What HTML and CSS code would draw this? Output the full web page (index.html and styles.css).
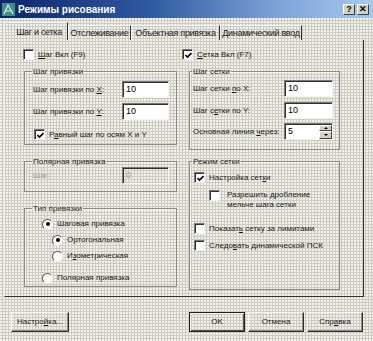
FILE: index.html
```html
<!DOCTYPE html>
<html>
<head>
    <title>Режимы рисования</title>
    <link rel="stylesheet" href="styles.css">
</head>
<body>
    <div class="dialog">
        <div class="titlebar">
            <span class="app-icon">
                <svg width="13" height="13" viewBox="0 0 13 13">
                    <rect x="0" y="0" width="13" height="13" fill="#3f8f86"/>
                    <path d="M2 11 L6 2 L11 11 M3.5 8 L9.5 8" stroke="#d8f0e8" stroke-width="1.2" fill="none"/>
                </svg>
            </span>
            <span class="title">Режимы рисования</span>
            <span class="tb-btns">
                <span class="tb-btn">?</span>
                <span class="tb-btn">✕</span>
            </span>
        </div>

        <div class="tabs">
            <span class="tab active">Шаг и сетка</span>
            <span class="tab t2">Отслеживание</span>
            <span class="tab t3">Объектная привязка</span>
            <span class="tab t4">Динамический ввод</span>
        </div>

        <div class="panel">
            <div class="col col-left">
                <div class="check top-check"><span class="box"></span><span><u>Ш</u>аг Вкл (F9)</span></div>

                <fieldset class="group g-snap">
                    <legend>Шаг привязки</legend>
                    <div class="field"><span>Шаг привязки по <u>X</u>:</span><span class="input">10</span></div>
                    <div class="field f2"><span>Шаг привязки по <u>Y</u>:</span><span class="input">10</span></div>
                    <div class="check equal"><span class="box on">
                        <svg width="7" height="7" viewBox="0 0 7 7"><path d="M0.5 3 L2.5 5 L6.5 1" stroke="#000" stroke-width="1.6" fill="none"/></svg>
                    </span><span>Р<u>а</u>вный шаг по осям X и Y</span></div>
                </fieldset>

                <fieldset class="group g-polar">
                    <legend>Полярная привязка</legend>
                    <div class="field disabled"><span>Шаг:</span><span class="input off">0</span></div>
                </fieldset>

                <fieldset class="group g-type">
                    <legend>Тип привязки</legend>
                    <div class="radio r1"><span class="dot on"></span><span>Шаговая привязка</span></div>
                    <div class="radio r2"><span class="dot on"></span><span>Ортогональная</span></div>
                    <div class="radio r2"><span class="dot"></span><span>И<u>з</u>ометрическая</span></div>
                    <div class="radio r1 r-last"><span class="dot"></span><span>Полярная привязка</span></div>
                </fieldset>
            </div>

            <div class="col col-right">
                <div class="check top-check right-check"><span class="box on">
                    <svg width="7" height="7" viewBox="0 0 7 7"><path d="M0.5 3 L2.5 5 L6.5 1" stroke="#000" stroke-width="1.6" fill="none"/></svg>
                </span><span><u>С</u>етка Вкл (F7)</span></div>

                <fieldset class="group g-grid">
                    <legend>Шаг сетки</legend>
                    <div class="field"><span>Шаг сетки <u>п</u>о X:</span><span class="input">10</span></div>
                    <div class="field f2"><span>Шаг с<u>е</u>тки по Y:</span><span class="input">10</span></div>
                    <div class="field f3"><span>Основная линия <u>ч</u>ерез:</span><span class="input spin">5<span class="spinner"><span class="up"></span><span class="down"></span></span></span></div>
                </fieldset>

                <fieldset class="group g-mode">
                    <legend>Режим сетки</legend>
                    <div class="check c1"><span class="box on">
                        <svg width="7" height="7" viewBox="0 0 7 7"><path d="M0.5 3 L2.5 5 L6.5 1" stroke="#000" stroke-width="1.6" fill="none"/></svg>
                    </span><span>Настройка сет<u>к</u>и</span></div>
                    <div class="check c2"><span class="box"></span><span>Разрешить дробление<br>мельче шага сетки</span></div>
                    <div class="check c3"><span class="box"></span><span>Показат<u>ь</u> сетку за лимитами</span></div>
                    <div class="check c4"><span class="box"></span><span>Следо<u>в</u>ать динамической ПСК</span></div>
                </fieldset>
            </div>
        </div>

        <div class="buttons">
            <span class="btn">Настро<u>й</u>ка...</span>
            <span class="spacer"></span>
            <span class="btn default">OK</span>
            <span class="btn">Отмена</span>
            <span class="btn">Спр<u>а</u>вка</span>
        </div>
    </div>
</body>
</html>
```

FILE: styles.css
```css
body {
    margin: 0;
    font-family: "Liberation Sans", Arial, sans-serif;
    font-size: 8px;
    color: #1a1a1a;
    white-space: nowrap;
}
u { text-decoration-thickness: 1px; text-underline-offset: 1px; }

.dialog {
    width: 373px;
    height: 341px;
    overflow: hidden;
    background-color: #cdcac2;
    background-image: radial-gradient(circle at 1px 1px, #f3f1eb 0.75px, transparent 1.1px);
    background-size: 3px 3px;
}

/* title bar */
.titlebar {
    height: 18px;
    display: flex;
    align-items: center;
    padding: 0 4px 0 2px;
    background: linear-gradient(to right, #0a246a, #2f5aa0 40%, #7ea4d8 75%, #a6caf0);
    color: #fff;
}
.app-icon { width: 13px; height: 13px; display: flex; margin-right: 3px; }
.title { font-weight: bold; font-size: 10px; flex: 1; }
.tb-btns { display: flex; gap: 2px; }
.tb-btn {
    width: 12px;
    height: 11px;
    box-sizing: border-box;
    background: #d4d0c8;
    border: 1px solid;
    border-color: #fff #404040 #404040 #fff;
    color: #000;
    font-size: 9px;
    font-weight: bold;
    line-height: 9px;
    text-align: center;
}

/* tabs */
.tabs {
    display: flex;
    align-items: flex-end;
    height: 18px;
    margin: 4px 0 0 4px;
    font-size: 9px;
    letter-spacing: -0.3px;
}
.tab {
    box-sizing: border-box;
    height: 15px;
    line-height: 14px;
    text-align: center;
    border-top: 1px solid #f4f4f4;
    border-left: 1px solid #f4f4f4;
    border-right: 1px solid #303030;
}
.tab.active { width: 64px; height: 18px; line-height: 18px; padding-left: 6px; }
.tab.t2 { width: 63px; }
.tab.t3 { width: 89px; }
.tab.t4 { width: 82px; }

/* page */
.panel {
    box-sizing: border-box;
    width: 360px;
    height: 257px;
    margin-left: 4px;
    border: 1px solid;
    border-color: #f4f4f4 #303030 #303030 #f4f4f4;
    border-top: none;
    display: flex;
    gap: 12px;
    padding: 9px 0 0 19px;
}
.col-left { width: 153px; }
.col-right { width: 151px; }

.group {
    margin: 0;
    min-width: 0;
    border: 1px solid #8d8a83;
    box-shadow: 1px 1px 0 #f4f2ee inset;
    padding: 0 7px 4px 8px;
}
.group legend { padding: 0 1px; line-height: 11px; margin-left: -1px; }

.g-snap { margin-top: 5px; }
.g-polar { margin-top: 11px; padding-bottom: 7px; }
.g-type { margin-top: 11px; padding-bottom: 2px; }
.g-grid { margin-top: 5px; padding: 0 6px 9px 3px; }
.g-mode { margin-top: 6px; padding: 0 6px 0 3px; height: 134px; box-sizing: border-box; }

/* fields */
.field {
    display: flex;
    align-items: center;
    justify-content: space-between;
    height: 17px;
    margin-top: 4px;
}
.field.f2 { margin-top: 5px; }
.g-grid .field { margin-top: 3px; }
.g-grid .field.f2 { margin-top: 5px; }
.g-grid .field.f3 { margin-top: 4px; }
.field.disabled { margin-top: 0; color: #a19e97; }

.input {
    position: relative;
    box-sizing: border-box;
    width: 47px;
    height: 17px;
    background: #fff;
    border: 1px solid;
    border-color: #7a7770 #f4f4f4 #f4f4f4 #7a7770;
    box-shadow: inset 1px 1px 0 #303030;
    padding-left: 3px;
    line-height: 15px;
    font-size: 9px;
    color: #000;
}
.g-grid .input { width: 49px; }
.input.off { background: transparent; color: #a19e97; }

.spinner {
    position: absolute;
    right: 0;
    top: 1px;
    width: 13px;
    height: 14px;
    display: flex;
    flex-direction: column;
}
.spinner span {
    flex: 1;
    background: #d4d0c8;
    border: 1px solid;
    border-color: #fff #404040 #404040 #fff;
    display: flex;
    align-items: center;
    justify-content: center;
}
.spinner .up::after {
    content: "";
    border: 2px solid transparent;
    border-bottom: 2px solid #000;
    margin-top: -2px;
}
.spinner .down::after {
    content: "";
    border: 2px solid transparent;
    border-top: 2px solid #000;
    margin-top: 2px;
}

/* checkboxes */
.check {
    display: flex;
    align-items: flex-start;
    line-height: 11px;
}
.box {
    flex: none;
    box-sizing: border-box;
    width: 11px;
    height: 11px;
    margin-right: 4px;
    background: #fff;
    border: 1px solid;
    border-color: #7a7770 #f4f4f4 #f4f4f4 #7a7770;
    box-shadow: inset 1px 1px 0 #303030;
    display: flex;
    align-items: center;
    justify-content: center;
}
.box svg { margin: 1px 0 0 1px; }
.top-check { height: 12px; margin-left: -1px; }
.right-check { margin-left: -7px; }
.check.equal { margin-top: 9px; margin-left: 1px; }

.g-mode .check { margin-left: 1px; }
.g-mode .c1 { margin-top: 5px; }
.g-mode .c2 { margin: 7px 0 0 16px; line-height: 10px; }
.g-mode .c2 .box { margin-top: 0; margin-right: 7px; }
.g-mode .c3 { margin-top: 13px; }
.g-mode .c4 { margin-top: 6px; }

/* radios */
.radio {
    display: flex;
    align-items: center;
    height: 12px;
    line-height: 12px;
    margin-top: 4px;
}
.radio.r1 { margin-left: 9px; }
.radio.r2 { margin-left: 19px; }
.radio:first-of-type { margin-top: 4px; }
.radio.r-last { margin-top: 10px; }
.dot {
    box-sizing: border-box;
    width: 11px;
    height: 11px;
    margin-right: 4px;
    border-radius: 50%;
    background: #fff;
    border: 1px solid;
    border-color: #5a5852 #f4f4f4 #f4f4f4 #5a5852;
    display: flex;
    align-items: center;
    justify-content: center;
}
.dot.on::after {
    content: "";
    width: 4px;
    height: 4px;
    border-radius: 50%;
    background: #000;
}

/* bottom buttons */
.buttons {
    display: flex;
    gap: 3px;
    margin-top: 15px;
    padding: 0 10px 0 11px;
}
.spacer { flex: 1; }
.btn {
    box-sizing: border-box;
    width: 56px;
    height: 20px;
    line-height: 17px;
    text-align: center;
    border: 1px solid;
    border-color: #f4f4f4 #303030 #303030 #f4f4f4;
    box-shadow: inset -1px -1px 0 #8d8a83;
}
.btn:first-child { width: 58px; }
.btn.default {
    border-color: #202020;
    box-shadow: inset 1px 1px 0 #f4f4f4, inset -1px -1px 0 #5a5852;
}
```
